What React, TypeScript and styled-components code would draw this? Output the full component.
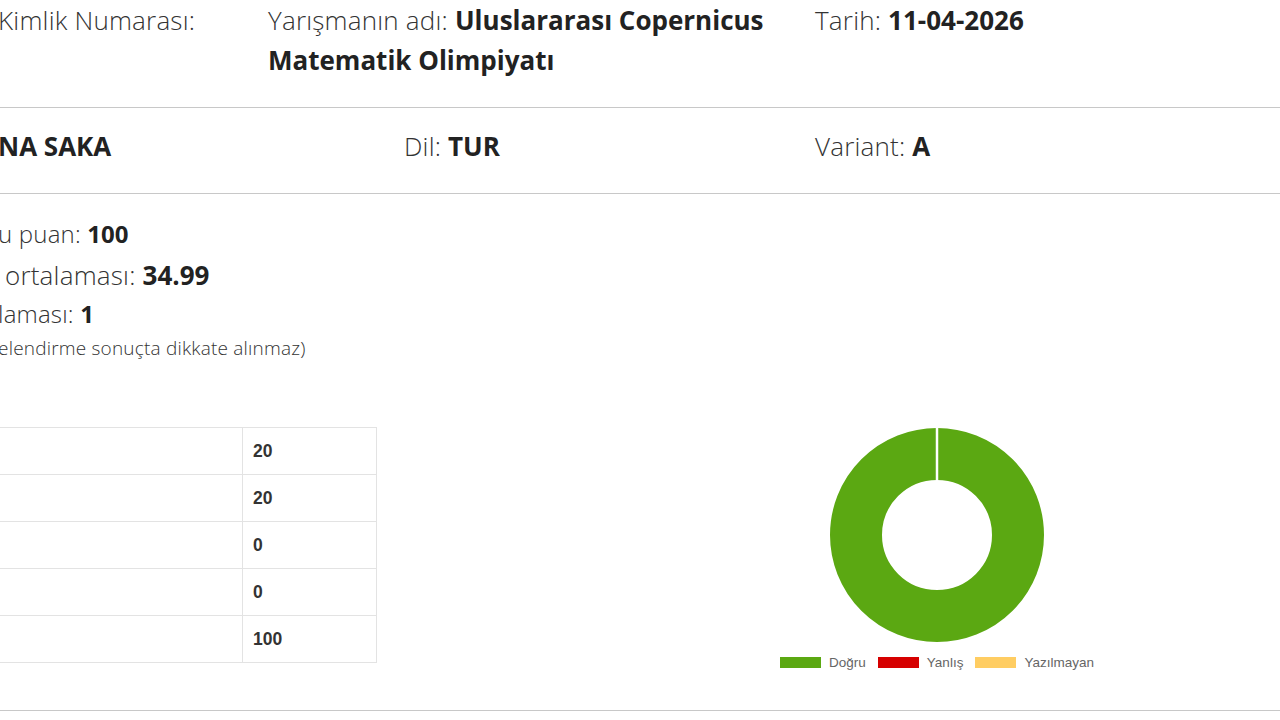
import React from "react";
import styled, { createGlobalStyle } from "styled-components";

const GlobalStyle = createGlobalStyle`
  html, body { margin: 0; padding: 0; background: #fff; overflow: hidden; }
  body { font-family: "Open Sans", "Noto Sans", sans-serif; color: #333; }
  * { box-sizing: border-box; }
`;

const Page = styled.main`
  width: 1282px;
  margin-left: -2px;
`;

const InfoRow = styled.section<{ $cols: string; $pt: number; $pb: number }>`
  display: grid;
  grid-template-columns: ${(p) => p.$cols};
  padding: ${(p) => p.$pt}px 0 ${(p) => p.$pb}px;
  border-bottom: 1px solid #c8c8c8;
`;

const Field = styled.div`
  font-size: 26px;
  line-height: 40px;
  font-weight: 300;
  letter-spacing: 0.2px;
  color: #333;
  padding-right: 16px;
`;

const Value = styled.strong`
  font-weight: 700;
  letter-spacing: 0;
  color: #222;
`;

const ResultSection = styled.section`
  padding: 20px 0 40px;
  border-bottom: 1px solid #c8c8c8;
`;

const Stats = styled.div`
  display: flex;
  flex-direction: column;
`;

const StatLine = styled.div<{ $size: number; $lh: number }>`
  font-size: ${(p) => p.$size}px;
  line-height: ${(p) => p.$lh}px;
  font-weight: 300;
  letter-spacing: 0.2px;
  color: #333;
  white-space: nowrap;
`;

const ResultsGrid = styled.div`
  display: grid;
  grid-template-columns: 406px 1fr;
  margin-top: 61px;
  align-items: start;
`;

const ScoreTable = styled.table`
  border-collapse: collapse;
  margin-left: -200px;
  width: 579px;
  font-family: "Liberation Sans", Arial, sans-serif;
  font-size: 17.5px;
  color: #333;
  background: #fff;
`;

const Cell = styled.td<{ $label?: boolean }>`
  border: 1px solid #e3e3e3;
  height: 47px;
  padding: 0 10px;
  width: ${(p) => (p.$label ? "444px" : "auto")};
  font-weight: 700;
  vertical-align: middle;
`;

const ChartColumn = styled.div`
  display: flex;
  justify-content: center;
  padding-left: 190px;
`;

const ChartBlock = styled.figure`
  margin: 0;
  display: flex;
  flex-direction: column;
  align-items: center;
`;

const Legend = styled.ul`
  list-style: none;
  margin: 12px 0 0;
  padding: 0;
  display: flex;
  align-items: center;
  gap: 12px;
  font-family: "Liberation Sans", Arial, sans-serif;
  font-size: 13.5px;
  line-height: 15px;
  color: #666;
`;

const LegendItem = styled.li`
  display: flex;
  align-items: center;
  gap: 8px;
`;

const Swatch = styled.span<{ $color: string }>`
  width: 41px;
  height: 11px;
  background: ${(p) => p.$color};
`;

const rows = ["20", "20", "0", "0", "100"];

const legend = [
  { name: "Doğru", color: "#5ba812" },
  { name: "Yanlış", color: "#d60000" },
  { name: "Yazılmayan", color: "#ffcd62" },
];

const Donut = () => (
  <svg width="216" height="216" viewBox="0 0 216 216" aria-label="Sonuç grafiği">
    <circle cx="108" cy="108" r="81" fill="none" stroke="#5ba812" strokeWidth="52" />
    <line x1="108" y1="0" x2="108" y2="56" stroke="#fff" strokeWidth="2.5" />
  </svg>
);

export default function App() {
  return (
    <>
      <GlobalStyle />
      <Page>
        <InfoRow $cols="270px 547px 1fr" $pt={0} $pb={27}>
          <Field>Kimlik Numarası:</Field>
          <Field>
            Yarışmanın adı: <Value>Uluslararası Copernicus Matematik Olimpiyatı</Value>
          </Field>
          <Field>
            Tarih: <Value>11-04-2026</Value>
          </Field>
        </InfoRow>
        <InfoRow $cols="406px 411px 1fr" $pt={18} $pb={27}>
          <Field>
            <Value>NA SAKA</Value>
          </Field>
          <Field>
            Dil: <Value>TUR</Value>
          </Field>
          <Field>
            Variant: <Value>A</Value>
          </Field>
        </InfoRow>
        <ResultSection>
          <Stats>
            <StatLine $size={24} $lh={40}>
              u puan: <Value>100</Value>
            </StatLine>
            <StatLine $size={26} $lh={43}>
              &nbsp;ortalaması: <Value>34.99</Value>
            </StatLine>
            <StatLine $size={24} $lh={33}>
              laması: <Value>1</Value>
            </StatLine>
            <StatLine $size={19} $lh={36}>
              elendirme sonuçta dikkate alınmaz)
            </StatLine>
          </Stats>
          <ResultsGrid>
            <ScoreTable>
              <tbody>
                {rows.map((v, i) => (
                  <tr key={i}>
                    <Cell $label />
                    <Cell>{v}</Cell>
                  </tr>
                ))}
              </tbody>
            </ScoreTable>
            <ChartColumn>
              <ChartBlock>
                <Donut />
                <Legend>
                  {legend.map((l) => (
                    <LegendItem key={l.name}>
                      <Swatch $color={l.color} />
                      {l.name}
                    </LegendItem>
                  ))}
                </Legend>
              </ChartBlock>
            </ChartColumn>
          </ResultsGrid>
        </ResultSection>
      </Page>
    </>
  );
}
